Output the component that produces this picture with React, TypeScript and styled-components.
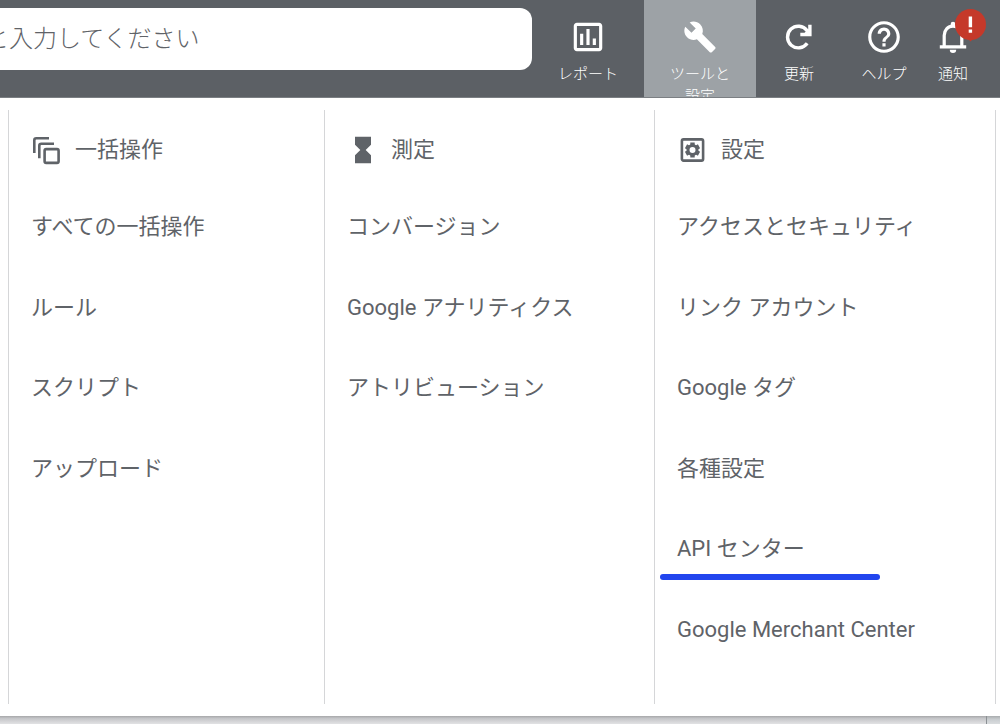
import React from "react";
import styled, { createGlobalStyle } from "styled-components";
import { MdBuild, MdHelpOutline, MdHourglassFull, MdOutlineAssessment } from "react-icons/md";

const GlobalStyle = createGlobalStyle`
  *, *::before, *::after { box-sizing: border-box; }
  body {
    margin: 0;
    background: #fff;
    color: #5f6368;
    font-family: Roboto, "Noto Sans CJK JP", sans-serif;
    font-size: 22px;
    line-height: 32px;
  }
`;

const Page = styled.div`
  display: flex;
  flex-direction: column;
  min-height: 100vh;
  overflow: hidden;
`;

const Header = styled.header`
  display: flex;
  align-items: stretch;
  height: 98px;
  padding-right: 20px;
  background: #5c6065;
  border-bottom: 1px solid #7b7f83;
  overflow: hidden;
`;

const SearchInput = styled.input`
  flex: 1;
  min-width: 0;
  height: 62px;
  margin: 8px 0 0 -40px;
  padding: 0 25px;
  border: 0;
  border-radius: 12px;
  background: #fff;
  color: #5f6368;
  font: 300 24px/32px Roboto, "Noto Sans CJK JP", sans-serif;
  &::placeholder {
    color: #5f6368;
    opacity: 1;
  }
`;

const Toolbar = styled.nav`
  display: flex;
`;

const ToolButton = styled.button<{ $width: number; $active?: boolean }>`
  display: flex;
  flex-direction: column;
  align-items: center;
  justify-content: flex-start;
  gap: 7px;
  width: ${(p) => p.$width}px;
  padding: 18px 0 0;
  border: 0;
  background: ${(p) => (p.$active ? "#9da2a6" : "transparent")};
  color: #fff;
  font: 300 15px/22px Roboto, "Noto Sans CJK JP", sans-serif;
  cursor: pointer;
`;

const IconHolder = styled.span`
  position: relative;
  display: flex;
  align-items: center;
  justify-content: center;
  flex: none;
  width: 38px;
  height: 38px;
`;

const ToolLabel = styled.span`
  max-width: 64px;
`;

const Badge = styled.span`
  position: absolute;
  top: -9px;
  right: -14px;
  width: 31px;
  height: 31px;
`;

const Panel = styled.main`
  flex: 1;
  display: grid;
  grid-template-columns: 316fr 330fr 342fr;
  padding: 12px 4px 12px 8px;
  background: #fff;
`;

const Column = styled.section`
  display: flex;
  flex-direction: column;
  padding: 24px 0 34px 22px;
  border-left: 1px solid #d5d6d8;
  &:last-child {
    border-right: 1px solid #d5d6d8;
  }
`;

const ColumnTitle = styled.h2`
  display: flex;
  align-items: center;
  gap: 12px;
  height: 53px;
  margin: 0;
  padding-bottom: 21px;
  font-size: 22px;
  font-weight: 400;
  line-height: 32px;
`;

const LinkList = styled.ul`
  flex: 1;
  display: grid;
  grid-template-rows: repeat(6, 1fr);
  margin: 0;
  padding: 0;
  list-style: none;
`;

const LinkItem = styled.li`
  display: flex;
  align-items: center;
`;

const MenuLink = styled.a<{ $marked?: boolean }>`
  position: relative;
  color: inherit;
  text-decoration: none;
  white-space: nowrap;
  &::after {
    content: "";
    display: ${(p) => (p.$marked ? "block" : "none")};
    position: absolute;
    left: -17px;
    bottom: -15px;
    width: 220px;
    height: 6px;
    border-radius: 3px;
    background: #2245ee;
  }
`;

const PanelShadow = styled.div`
  display: flex;
  justify-content: flex-end;
  height: 8px;
  background: linear-gradient(#a6a7a9, #c4c5c8 30%, #e2e2e4);
`;

const ScrollTrack = styled.div`
  width: 14px;
  border-left: 1px solid #8b9094;
  background: linear-gradient(#a9acae, #c8cccf 40%, #dadddf);
`;

const RefreshIcon = () => (
  <svg width="38" height="38" viewBox="0 0 38 38" fill="none" aria-hidden="true">
    <path d="M27.2 25.2A10.8 10.8 0 1 1 27 12.6L29.5 15.8" stroke="currentColor" strokeWidth="3.4" />
    <path d="M28.2 6.8h3.4v11.4H20.3v-3.4h4.2l3.7-3.6z" fill="currentColor" />
  </svg>
);

const BellIcon = () => (
  <svg width="38" height="38" viewBox="0 0 38 38" fill="none" aria-hidden="true">
    <path d="M10.2 28.5V17.5c0-5.4 3.6-9.3 8.8-9.3s8.8 3.9 8.8 9.3v11" stroke="currentColor" strokeWidth="3.2" />
    <path d="M5.8 27.2h26.4v3.4H5.8zM16.7 9V6a2.3 2.3 0 0 1 4.6 0v3zM15.8 31.8h6.4a3.2 3.2 0 0 1-6.4 0z" fill="currentColor" />
  </svg>
);

const AlertBadge = () => (
  <svg width="31" height="33" viewBox="0 0 31 33" aria-hidden="true">
    <circle cx="15.5" cy="15.5" r="15.5" fill="#c5392a" />
    <path d="M13 30h5l-2.5 2.6z" fill="#c5392a" />
    <path d="M13.7 7.5h3.4v10.8h-3.4zM13.7 20.6h3.4v3.2h-3.4z" fill="#fff" />
  </svg>
);

const StackIcon = () => (
  <svg width="32" height="32" viewBox="0 0 32 32" fill="none" stroke="currentColor" strokeWidth="2.6" aria-hidden="true">
    <path d="M3.3 19V6.3a2 2 0 0 1 2-2H18" />
    <path d="M8.3 24.2V11.8a2 2 0 0 1 2-2H23" />
    <rect x="13.6" y="15.1" width="14" height="13.8" rx="1.6" />
  </svg>
);

const GearBoxIcon = () => (
  <svg width="32" height="32" viewBox="0 0 32 32" fill="none" stroke="currentColor" aria-hidden="true">
    <rect x="4.9" y="5.4" width="21.2" height="21.2" rx="1.6" strokeWidth="2.6" />
    <circle cx="15.5" cy="16" r="4.5" strokeWidth="3" />
    {[0, 60, 120].map((angle) => (
      <path
        key={angle}
        d="M15.5 8.5v3M15.5 20.5v3"
        strokeWidth="4.4"
        transform={`rotate(${angle} 15.5 16)`}
      />
    ))}
  </svg>
);

const tools = [
  { label: "レポート", width: 112, icon: <MdOutlineAssessment size={38} /> },
  { label: "ツールと設定", width: 112, icon: <MdBuild size={34} />, active: true },
  { label: "更新", width: 86, icon: <RefreshIcon /> },
  { label: "ヘルプ", width: 84, icon: <MdHelpOutline size={38} /> },
  { label: "通知", width: 54, icon: <BellIcon />, alert: true },
];

const columns = [
  {
    title: "一括操作",
    icon: <StackIcon />,
    links: ["すべての一括操作", "ルール", "スクリプト", "アップロード"],
  },
  {
    title: "測定",
    icon: <MdHourglassFull size={32} />,
    links: ["コンバージョン", "Google アナリティクス", "アトリビューション"],
  },
  {
    title: "設定",
    icon: <GearBoxIcon />,
    links: [
      "アクセスとセキュリティ",
      "リンク アカウント",
      "Google タグ",
      "各種設定",
      "API センター",
      "Google Merchant Center",
    ],
  },
];

const markedLink = "API センター";

export default function App() {
  return (
    <Page lang="ja">
      <GlobalStyle />
      <Header>
        <SearchInput type="search" aria-label="検索" placeholder="と入力してください" />
        <Toolbar>
          {tools.map((tool) => (
            <ToolButton key={tool.label} type="button" $width={tool.width} $active={tool.active}>
              <IconHolder>
                {tool.icon}
                {tool.alert && (
                  <Badge>
                    <AlertBadge />
                  </Badge>
                )}
              </IconHolder>
              <ToolLabel>{tool.label}</ToolLabel>
            </ToolButton>
          ))}
        </Toolbar>
      </Header>
      <Panel>
        {columns.map((column) => (
          <Column key={column.title}>
            <ColumnTitle>
              {column.icon}
              {column.title}
            </ColumnTitle>
            <LinkList>
              {column.links.map((link) => (
                <LinkItem key={link}>
                  <MenuLink href="#" $marked={link === markedLink}>
                    {link}
                  </MenuLink>
                </LinkItem>
              ))}
            </LinkList>
          </Column>
        ))}
      </Panel>
      <PanelShadow>
        <ScrollTrack />
      </PanelShadow>
    </Page>
  );
}
